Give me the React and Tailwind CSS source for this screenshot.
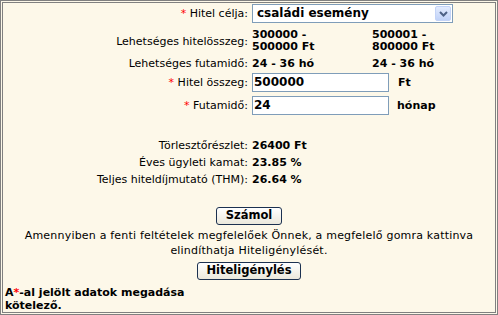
import React from 'react';

function Star() {
    return <span className="text-[#ff0000]">*</span>;
}

function Row({ label, children, className = '' }) {
    return (
        <div className={`flex items-center gap-x-1 ${className}`}>
            <div className="w-[245px] shrink-0 text-right">{label}</div>
            <div className="flex items-center">{children}</div>
        </div>
    );
}

function XpButton({ children, className = '' }) {
    return (
        <button
            type="button"
            className={`h-[18px] rounded-[3px] border border-[#1c3150] bg-gradient-to-b from-white to-[#ebe8dc] text-[11.5px] font-bold leading-none text-black ${className}`}
        >
            {children}
        </button>
    );
}

export default function App() {
    return (
        <div className="h-[315px] w-[498px] border-[3px] border-double border-[#808080] bg-[#fdf8e9] font-['DejaVu_Sans',Verdana,sans-serif] text-[11px] leading-[13px] text-black">
            {/* Hitel célja */}
            <Row label={<><Star /> Hitel célja:</>} className="mt-px h-[19px]">
                <div className="flex h-[19px] w-[201px] items-center justify-between border border-[#7f9db9] bg-white pl-1 pr-px">
                    <span className="text-[12px] font-bold">családi esemény</span>
                    <span className="flex h-[15px] w-[16px] items-center justify-center rounded-[2px] border border-[#c3d3f7] bg-gradient-to-b from-[#e3ebfd] to-[#c0d2f8]">
                        <svg width="9" height="6" viewBox="0 0 9 6">
                            <path d="M1 1 L4.5 4.5 L8 1" fill="none" stroke="#4d6185" strokeWidth="2" />
                        </svg>
                    </span>
                </div>
            </Row>

            {/* Lehetséges hitelösszeg */}
            <Row label="Lehetséges hitelösszeg:" className="mt-[6px] h-[24px]">
                <div className="w-[120px] font-bold leading-[12px]">
                    300000 -<br />500000 Ft
                </div>
                <div className="font-bold leading-[12px]">
                    500001 -<br />800000 Ft
                </div>
            </Row>

            {/* Lehetséges futamidő */}
            <Row label="Lehetséges futamidő:" className="mt-[3px] h-[14px]">
                <div className="w-[120px] font-bold">24 - 36 hó</div>
                <div className="font-bold">24 - 36 hó</div>
            </Row>

            {/* Hitel összeg */}
            <Row label={<><Star /> Hitel összeg:</>} className="mt-[3px] h-[19px]">
                <div className="flex h-[19px] w-[137px] items-center border border-[#7f9db9] bg-white pl-px text-[12px] font-bold">
                    500000
                </div>
                <span className="ml-[9px] font-bold">Ft</span>
            </Row>

            {/* Futamidő */}
            <Row label={<><Star /> Futamidő:</>} className="mt-[4px] h-[19px]">
                <div className="flex h-[19px] w-[137px] items-center border border-[#7f9db9] bg-white pl-px text-[12px] font-bold">
                    24
                </div>
                <span className="ml-[8px] font-bold">hónap</span>
            </Row>

            {/* Eredmények */}
            <div className="mt-[22px] flex flex-col">
                <Row label="Törlesztőrészlet:" className="h-[17px]">
                    <span className="font-bold">26400 Ft</span>
                </Row>
                <Row label="Éves ügyleti kamat:" className="h-[17px]">
                    <span className="font-bold">23.85 %</span>
                </Row>
                <Row label="Teljes hiteldíjmutató (THM):" className="h-[17px]">
                    <span className="font-bold">26.64 %</span>
                </Row>
            </div>

            <div className="mt-[19px] flex flex-col items-center">
                <XpButton className="px-[9px]">Számol</XpButton>
                <p className="mt-[3px] text-center leading-[15px] tracking-[0.2px]">
                    Amennyiben a fenti feltételek megfelelőek Önnek, a megfelelő gomra kattinva
                    <br />
                    elindíthatja Hiteligénylését.
                </p>
                <div className="mt-[4px]">
                    <XpButton className="px-[8px]">Hiteligénylés</XpButton>
                </div>
            </div>

            <p className="mt-[6px] pl-[2px] font-bold leading-[13px]">
                A<span className="text-[#ff0000]">*</span>-al jelölt adatok megadása
                <br />
                kötelező.
            </p>
        </div>
    );
}
